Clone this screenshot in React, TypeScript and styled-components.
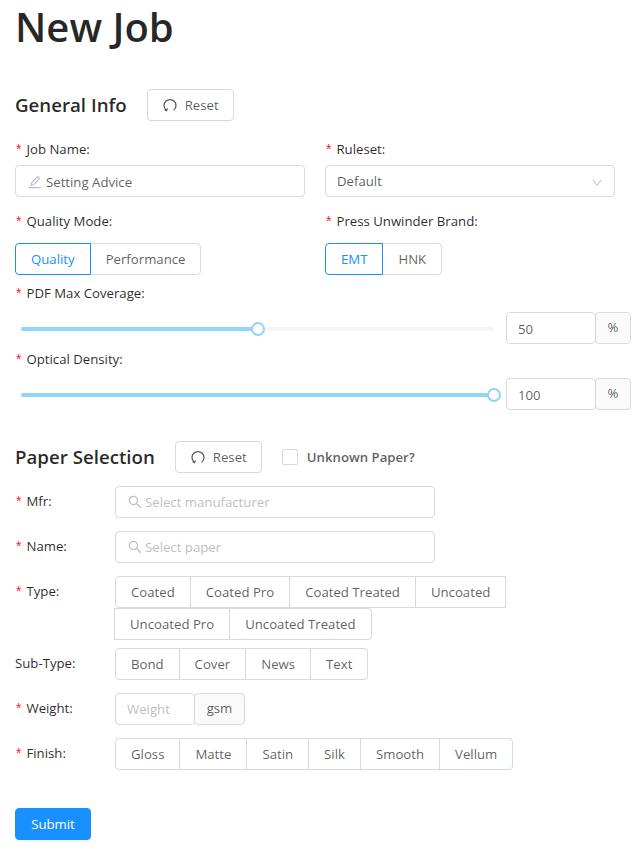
import React from "react";
import styled, { createGlobalStyle } from "styled-components";
import { AiOutlineEdit, AiOutlineSearch, AiOutlineDown } from "react-icons/ai";

const Global = createGlobalStyle`
  html, body { margin: 0; padding: 0; background: #fff; }
  body { font-family: "Open Sans", "Noto Sans", "Liberation Sans", sans-serif; font-size: 13.2px; color: rgba(0,0,0,.65); }
  * { box-sizing: border-box; }
`;

const Page = styled.main`
  width: 642px;
  height: 850px;
  padding: 0 0 0 15px;
  overflow: hidden;
`;
const Title = styled.h1`
  margin: 0;
  height: 89px;
  font-size: 40px;
  line-height: 54px;
  font-weight: 600;
  color: rgba(0,0,0,.85);
`;
const SectionHead = styled.div`
  display: flex;
  align-items: center;
  height: 32px;
  margin-top: ${p => p.$mt ?? 0}px;
  margin-bottom: ${p => p.$mb ?? 0}px;
`;
const SectionTitle = styled.h2`
  margin: 0;
  font-size: 18.7px;
  line-height: 32px;
  font-weight: 600;
  color: rgba(0,0,0,.85);
`;
const ResetButton = styled.button`
  display: inline-flex;
  align-items: center;
  gap: 8px;
  width: 87px;
  height: 32px;
  margin-left: 20px;
  padding: 0 0 0 15px;
  font: inherit;
  color: rgba(0,0,0,.65);
  background: #fff;
  border: 1px solid #d9d9d9;
  border-radius: 4px;
  box-shadow: 0 2px 0 rgba(0,0,0,.015);
`;
const TwoCols = styled.div`
  display: grid;
  grid-template-columns: 290px 290px;
  column-gap: 20px;
`;
const Field = styled.div`
  display: flex;
  flex-direction: column;
`;
const Label = styled.label`
  display: block;
  height: ${p => p.$h || 40}px;
  padding-top: ${p => p.$pt ?? 0}px;
  line-height: 20px;
  color: rgba(0,0,0,.85);
  white-space: nowrap;
`;
const Star = styled.span`
  color: #f5222d;
  margin-left: 1px;
  margin-right: 5px;
  font-family: "Liberation Sans", sans-serif;
  font-size: 14px;
`;
const InputBox = styled.div`
  display: flex;
  align-items: center;
  height: 32px;
  width: ${p => (p.$w ? p.$w + "px" : "100%")};
  padding: 0 11px;
  background: #fff;
  border: 1px solid #d9d9d9;
  border-radius: 4px;
  white-space: nowrap;
  color: ${p => (p.$placeholder ? "#bfbfbf" : "rgba(0,0,0,.65)")};
`;
const ValueInput = styled(InputBox)`
  padding-top: 1px;
`;
const SelectBox = styled(InputBox)`
  justify-content: space-between;
`;
const IconSlot = styled.span`
  display: inline-flex;
  margin-right: ${p => p.$gap ?? 2}px;
  color: #bfbfbf;
  font-size: 16px;
`;
const Chevron = styled.span`
  display: inline-flex;
  margin-top: 4px;
  color: #bfbfbf;
  font-size: 12px;
`;
const Segments = styled.div`
  display: flex;
  flex-wrap: wrap;
  width: ${p => (p.$w ? p.$w + "px" : "auto")};
`;
const Segment = styled.span`
  display: inline-flex;
  align-items: center;
  justify-content: center;
  height: 32px;
  padding: 0 15px;
  margin-left: ${p => (p.$first ? 0 : -1)}px;
  white-space: nowrap;
  background: #fff;
  position: relative;
  z-index: ${p => (p.$active ? 1 : 0)};
  color: ${p => (p.$active ? "#1890ff" : "rgba(0,0,0,.65)")};
  border: 1px solid ${p => (p.$active ? "#1890ff" : "#d9d9d9")};
  border-radius: ${p => (p.$first ? "4px" : "0")} ${p => (p.$last ? "4px 4px" : "0 0")} ${p => (p.$first ? "4px" : "0")};
`;
const SliderRow = styled.div`
  display: flex;
  align-items: center;
  height: 32px;
`;
const Rail = styled.div`
  position: relative;
  width: 473px;
  height: 4px;
  margin: 2px 12px 0 6px;
  background: #f5f5f5;
  border-radius: 2px;
`;
const Fill = styled.div`
  height: 100%;
  background: #91d5ff;
  border-radius: 2px;
`;
const Handle = styled.span`
  position: absolute;
  top: -5px;
  width: 14px;
  height: 14px;
  margin-left: -7px;
  background: #fff;
  border: 2px solid #91d5ff;
  border-radius: 50%;
`;
const NumberBox = styled.div`
  display: flex;
  align-items: center;
  width: ${p => p.$w}px;
  height: 32px;
  padding: ${p => (p.$placeholder ? 0 : 1)}px 11px 0;
  background: #fff;
  border: 1px solid #d9d9d9;
  border-radius: 4px;
  color: ${p => (p.$placeholder ? "#bfbfbf" : "rgba(0,0,0,.65)")};
`;
const Addon = styled.div`
  display: flex;
  align-items: center;
  justify-content: center;
  width: ${p => p.$w}px;
  height: 32px;
  margin-left: -1px;
  background: #fafafa;
  border: 1px solid #d9d9d9;
  border-radius: 4px;
  padding-bottom: 2px;
`;
const InputGroup = styled.div`
  display: flex;
`;
const PaperRow = styled.div`
  display: flex;
  align-items: flex-start;
  margin-bottom: ${p => p.$mb ?? 13}px;
`;
const RowLabel = styled.label`
  width: 100px;
  flex: none;
  line-height: 30px;
  color: rgba(0,0,0,.85);
`;
const CheckLabel = styled.label`
  display: inline-flex;
  align-items: center;
  margin-left: 20px;
  font-weight: 600;
  color: rgba(0,0,0,.65);
  white-space: nowrap;
`;
const CheckBoxMark = styled.span`
  width: 16px;
  height: 16px;
  margin-right: 9px;
  background: #fff;
  border: 1px solid #d9d9d9;
  border-radius: 2px;
`;
const Submit = styled.button`
  display: block;
  width: 76px;
  height: 32px;
  margin-top: 38px;
  padding: 0;
  font: inherit;
  color: #fff;
  background: #1890ff;
  border: 1px solid #1890ff;
  border-radius: 4px;
  box-shadow: 0 2px 0 rgba(0,0,0,.045);
`;

const ReloadIcon = () => (
  <svg width="14" height="14" viewBox="0 0 14 14" fill="none" stroke="#595959" strokeWidth="1.25">
    <path d="M3.4 12.2 C1.9 11.1 1 9.4 1 7.5 C1 4.2 3.7 1.5 7 1.5 C10.3 1.5 13 4.2 13 7.5 C13 9.4 12.1 11.1 10.6 12.2" />
    <path d="M1.6 11.6 L3.6 12.6 L4.4 10.4" />
  </svg>
);

const Reset = () => (
  <ResetButton>
    <ReloadIcon />
    Reset
  </ResetButton>
);

const Req = () => <Star>*</Star>;

const Group = ({ items, active, w }: { items: string[]; active?: string; w?: number }) => (
  <Segments $w={w}>
    {items.map((t, i) => (
      <Segment key={t} $first={i === 0} $last={i === items.length - 1} $active={t === active}>
        {t}
      </Segment>
    ))}
  </Segments>
);

const Slider = ({ value }: { value: number }) => (
  <SliderRow>
    <Rail>
      <Fill style={{ width: `${value}%` }} />
      <Handle style={{ left: `${value}%` }} />
    </Rail>
    <InputGroup>
      <NumberBox $w={90}>{value}</NumberBox>
      <Addon $w={36}>%</Addon>
    </InputGroup>
  </SliderRow>
);

export default function App() {
  return (
    <Page>
      <Global />
      <Title>New Job</Title>
      <SectionHead>
        <SectionTitle>General Info</SectionTitle>
        <Reset />
      </SectionHead>
      <TwoCols>
        <Field>
          <Label $h={44} $pt={18}><Req />Job Name:</Label>
          <ValueInput>
            <IconSlot $gap={3}><AiOutlineEdit /></IconSlot>
            Setting Advice
          </ValueInput>
        </Field>
        <Field>
          <Label $h={44} $pt={18}><Req />Ruleset:</Label>
          <SelectBox>
            Default
            <Chevron><AiOutlineDown /></Chevron>
          </SelectBox>
        </Field>
        <Field>
          <Label $h={46} $pt={14}><Req />Quality Mode:</Label>
          <Group items={["Quality", "Performance"]} active="Quality" />
        </Field>
        <Field>
          <Label $h={46} $pt={14}><Req />Press Unwinder Brand:</Label>
          <Group items={["EMT", "HNK"]} active="EMT" />
        </Field>
      </TwoCols>
      <Label $h={37} $pt={8}><Req />PDF Max Coverage:</Label>
      <Slider value={50} />
      <Label $h={34} $pt={5}><Req />Optical Density:</Label>
      <Slider value={100} />
      <SectionHead $mt={31} $mb={13}>
        <SectionTitle>Paper Selection</SectionTitle>
        <Reset />
        <CheckLabel><CheckBoxMark />Unknown Paper?</CheckLabel>
      </SectionHead>
      <PaperRow>
        <RowLabel><Req />Mfr:</RowLabel>
        <InputBox $w={320} $placeholder>
          <IconSlot><AiOutlineSearch /></IconSlot>
          Select manufacturer
        </InputBox>
      </PaperRow>
      <PaperRow>
        <RowLabel><Req />Name:</RowLabel>
        <InputBox $w={320} $placeholder>
          <IconSlot><AiOutlineSearch /></IconSlot>
          Select paper
        </InputBox>
      </PaperRow>
      <PaperRow $mb={8}>
        <RowLabel><Req />Type:</RowLabel>
        <Group
          items={["Coated", "Coated Pro", "Coated Treated", "Uncoated", "Uncoated Pro", "Uncoated Treated"]}
          w={400}
        />
      </PaperRow>
      <PaperRow>
        <RowLabel>Sub-Type:</RowLabel>
        <Group items={["Bond", "Cover", "News", "Text"]} />
      </PaperRow>
      <PaperRow>
        <RowLabel><Req />Weight:</RowLabel>
        <InputGroup>
          <NumberBox $w={80} $placeholder>Weight</NumberBox>
          <Addon $w={51}>gsm</Addon>
        </InputGroup>
      </PaperRow>
      <PaperRow $mb={0}>
        <RowLabel><Req />Finish:</RowLabel>
        <Group items={["Gloss", "Matte", "Satin", "Silk", "Smooth", "Vellum"]} />
      </PaperRow>
      <Submit>Submit</Submit>
    </Page>
  );
}
